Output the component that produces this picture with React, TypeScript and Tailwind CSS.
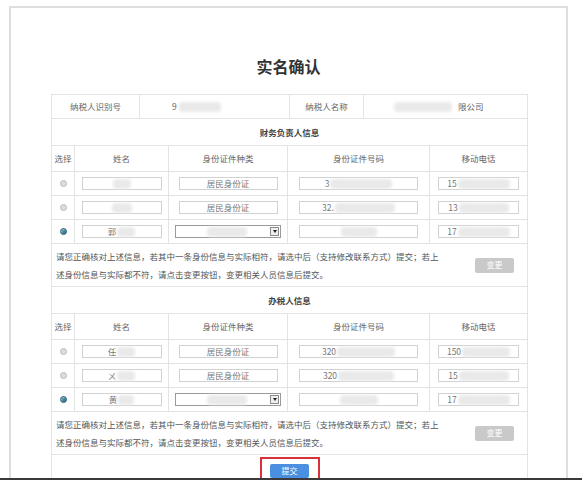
import React from "react";

const font = { fontFamily: '"Noto Sans CJK SC", "Noto Sans", sans-serif' };

type Row = {
	checked?: boolean;
	name: string;
	nameBlur: number;
	select?: boolean;
	id: string;
	idBlur: number;
	phone: string;
	phoneBlur: number;
};

const finance: Row[] = [
	{ name: "", nameBlur: 18, id: "3", idBlur: 62, phone: "15", phoneBlur: 52 },
	{ name: "", nameBlur: 20, id: "32.", idBlur: 60, phone: "13", phoneBlur: 50 },
	{ checked: true, name: "郭", nameBlur: 18, select: true, id: "", idBlur: 36, phone: "17", phoneBlur: 52 },
];

const agents: Row[] = [
	{ name: "任", nameBlur: 18, id: "320", idBlur: 58, phone: "150", phoneBlur: 48 },
	{ name: "ㄨ", nameBlur: 18, id: "320", idBlur: 56, phone: "15", phoneBlur: 50 },
	{ checked: true, name: "黄", nameBlur: 16, select: true, id: "", idBlur: 38, phone: "17", phoneBlur: 52 },
];

function Blur({ w }: { w: number }) {
	return <span className="inline-block h-[10px] bg-[#e9e9e9] blur-[1.5px] rounded-sm" style={{ width: w }} />;
}

function Field({ w, children }: { w: string; children: React.ReactNode }) {
	return (
		<div className={`${w} h-[13px] border border-[#d2d2d2] bg-white flex items-center justify-center gap-[1px] text-[8.5px] text-[#777]`}>
			{children}
		</div>
	);
}

function Radio({ checked }: { checked?: boolean }) {
	return checked ? (
		<div className="w-[7px] h-[7px] rounded-full bg-[#3f7e96] border border-[#2f6a80] shadow-[inset_1px_1px_1px_rgba(255,255,255,0.5)]" />
	) : (
		<div className="w-[7px] h-[7px] rounded-full bg-[#dcdcdc] border border-[#bdbdbd]" />
	);
}

function Section({ title, rows }: { title: string; rows: Row[] }) {
	return (
		<>
			<div className="h-[27px] flex items-center justify-center border-b border-[#e3e3e3] text-[8.5px] font-bold text-[#444]">
				{title}
			</div>
			<div className="grid grid-cols-[23px_94px_119px_142px_97px] h-[26px] border-b border-[#e3e3e3] text-[8.5px] text-[#666]">
				{["选择", "姓名", "身份证件种类", "身份证件号码", "移动电话"].map((h, i) => (
					<div key={h} className={`flex items-center justify-center ${i < 4 ? "border-r border-[#e3e3e3]" : ""}`}>
						{h}
					</div>
				))}
			</div>
			{rows.map((r, i) => (
				<div key={i} className="grid grid-cols-[23px_94px_119px_142px_97px] h-[24px] border-b border-[#e3e3e3]">
					<div className="flex items-center justify-center border-r border-[#e3e3e3]">
						<Radio checked={r.checked} />
					</div>
					<div className="flex items-center justify-center border-r border-[#e3e3e3]">
						<Field w="w-[80px]">
							<span>{r.name}</span>
							<Blur w={r.nameBlur} />
						</Field>
					</div>
					<div className="flex items-center justify-center border-r border-[#e3e3e3]">
						{r.select ? (
							<div className="w-[106px] h-[13px] border border-[#9a9a9a] bg-white flex items-center">
								<div className="flex-1 flex justify-center pl-[8px]">
									<Blur w={40} />
								</div>
								<div className="w-[9px] h-[9px] mr-[1px] border border-[#8a8a8a] bg-[#eee] flex items-center justify-center">
									<div className="w-0 h-0 border-l-[2.5px] border-r-[2.5px] border-t-[3px] border-l-transparent border-r-transparent border-t-[#222]" />
								</div>
							</div>
						) : (
							<Field w="w-[99px]">居民身份证</Field>
						)}
					</div>
					<div className="flex items-center justify-center border-r border-[#e3e3e3]">
						<Field w="w-[119px]">
							<span>{r.id}</span>
							<Blur w={r.idBlur} />
						</Field>
					</div>
					<div className="flex items-center justify-center">
						<Field w="w-[81px]">
							<span>{r.phone}</span>
							<Blur w={r.phoneBlur} />
						</Field>
					</div>
				</div>
			))}
			<div className="h-[43px] flex items-center justify-between border-b border-[#e3e3e3] pl-[4px] pr-[13px] text-[8.5px] text-[#555]">
				<div className="leading-[18px] whitespace-nowrap">
					<div>请您正确核对上述信息，若其中一条身份信息与实际相符，请选中后（支持修改联系方式）提交；若上</div>
					<div>述身份信息与实际都不符，请点击变更按钮，变更相关人员信息后提交。</div>
				</div>
				<div className="w-[39px] h-[15px] rounded-[2px] bg-[#c9c9c9] text-white text-[8px] flex items-center justify-center">
					变更
				</div>
			</div>
		</>
	);
}

export default function App() {
	return (
		<div className="w-[582px] h-[480px] bg-white flex flex-col overflow-hidden" style={font}>
			<div className="flex-1 overflow-hidden pt-[6px] pl-[9px] pr-[14px]">
				<div className="h-[600px] border-l-2 border-t-2 border-r-2 border-[#dedede]">
					<div className="mt-[48px] h-[20px] leading-[20px] text-center text-[16px] font-bold text-[#333]">
						实名确认
					</div>
					<div className="mt-[18px] ml-[40px] w-[477px] border border-[#e3e3e3] border-b-0">
						<div className="grid grid-cols-[88px_150px_74px_163px] h-[24px] border-b border-[#e3e3e3] text-[8.5px] text-[#666]">
							<div className="flex items-center justify-center border-r border-[#e3e3e3]">纳税人识别号</div>
							<div className="flex items-center pl-[32px] gap-[2px] border-r border-[#e3e3e3]">
								<span>9</span>
								<Blur w={42} />
							</div>
							<div className="flex items-center justify-center border-r border-[#e3e3e3]">纳税人名称</div>
							<div className="flex items-center pl-[30px] gap-[6px]">
								<Blur w={58} />
								<span>限公司</span>
							</div>
						</div>
						<Section title="财务负责人信息" rows={finance} />
						<Section title="办税人信息" rows={agents} />
						<div className="h-[40px] flex justify-center pt-[2px]">
							<div className="w-[60px] h-[40px] border-2 border-[#d9313a] flex justify-center pt-[5px]">
								<div className="w-[39px] h-[14px] rounded-[2px] bg-[#4b8fe0] text-white text-[8px] flex items-center justify-center">
									提交
								</div>
							</div>
						</div>
					</div>
				</div>
			</div>
			<div className="h-[2px] bg-[#3a3a3a]" />
		</div>
	);
}
